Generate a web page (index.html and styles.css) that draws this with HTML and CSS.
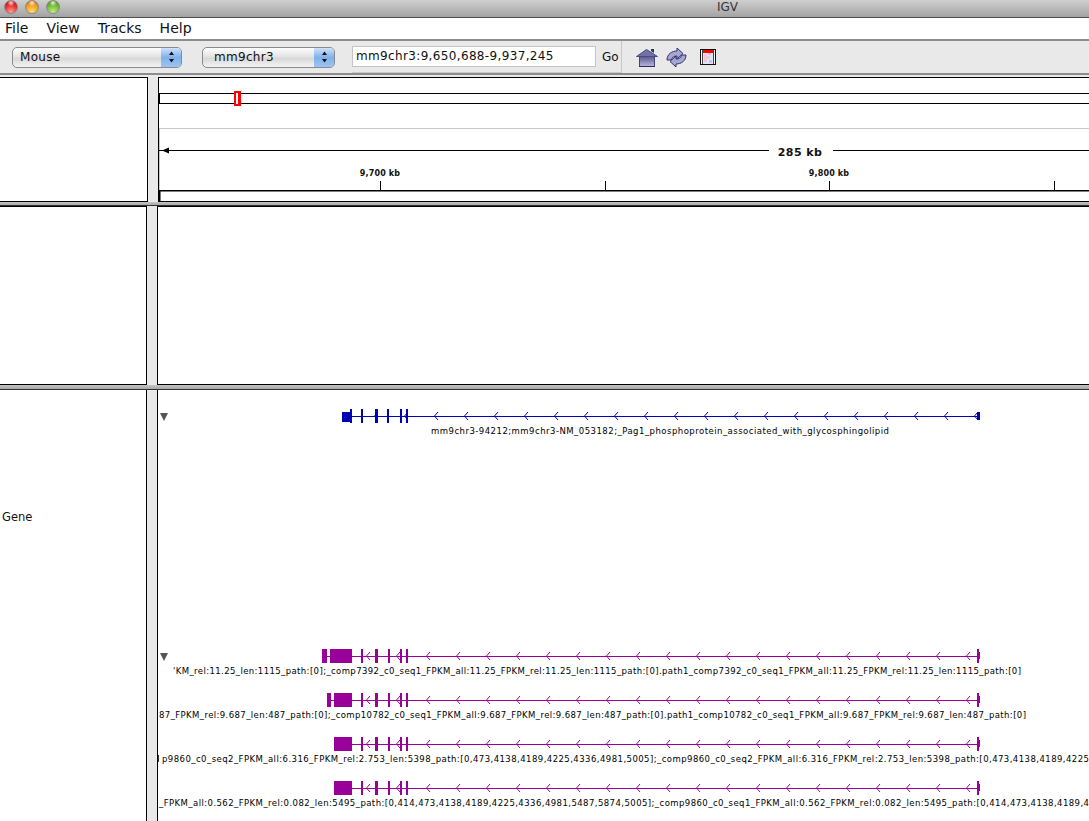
FILE: index.html
```html
<!DOCTYPE html>
<html lang="en">
<head>
  <meta charset="UTF-8" />
  <title>IGV</title>
  <link rel="stylesheet" href="styles.css">
</head>
<body>

  <div class="titlebar">
    <span class="light light-red"></span>
    <span class="light light-orange"></span>
    <span class="light light-green"></span>
    <span class="title">IGV</span>
  </div>

  <div class="menubar">
    <span class="menu-item">File</span>
    <span class="menu-item">View</span>
    <span class="menu-item">Tracks</span>
    <span class="menu-item">Help</span>
  </div>

  <div class="toolbar">
    <div class="select select-genome">
      <span class="select-label">Mouse</span>
      <span class="select-arrows">
        <svg width="5" height="12" viewBox="0 0 5 12"><path d="M2.500 .5L5 4H0zM0 8h5l-2.500 3.500z" fill="#111"/></svg>
      </span>
    </div>
    <div class="select select-chr">
      <span class="select-label">mm9chr3</span>
      <span class="select-arrows">
        <svg width="5" height="12" viewBox="0 0 5 12"><path d="M2.500 .5L5 4H0zM0 8h5l-2.500 3.500z" fill="#111"/></svg>
      </span>
    </div>
    <div class="search">
      <div class="search-box">mm9chr3:9,650,688-9,937,245</div>
      <span class="go">Go</span>
    </div>
    <div class="tools">
      <svg class="tool tool-home" width="22" height="19" viewBox="0 0 22 19">
        <defs>
          <linearGradient id="home-wall" x1="0" y1="0" x2="0" y2="1">
            <stop offset="0" stop-color="#5d5d92"/>
            <stop offset="1" stop-color="#b4b4da"/>
          </linearGradient>
        </defs>
        <path d="M15 1h3v4l-3-2z" fill="#2f2f6e"/>
        <path d="M0.500 8.500L10.500 1.500L21.500 8.500z" fill="#7171a6" stroke="#4a4a80"/>
        <rect x="4" y="9" width="14" height="9" fill="url(#home-wall)"/>
        <path d="M3.500 9v9M18.500 9v9" stroke="#44447a"/>
        <path d="M3 18.500h16" stroke="#2b2b60"/>
      </svg>
      <svg class="tool tool-refresh" width="22" height="21" viewBox="0 0 22 21">
        <path d="M1 13C1 7 6 4 11 4V1l6 5.500L11 12V9C8 9 6 10 5.500 13z" fill="#a6a6d2" stroke="#33336e"/>
        <path d="M20 8c0 6-5 9-10 9v3l-6-5.500L10 9v3c3 0 5-1 5.500-4z" fill="#a6a6d2" stroke="#33336e"/>
      </svg>
      <svg class="tool tool-region" width="16" height="16" viewBox="0 0 16 16">
        <rect x="0.500" y="0.500" width="15" height="15" fill="#fff" stroke="#111"/>
        <rect x="3" y="1" width="10" height="3" fill="#f00"/>
        <rect x="3" y="4" width="10" height="11" fill="#dfe4f6"/>
        <path d="M2.500 1v14M13.500 1v14" stroke="#444"/>
        <path d="M4 5h3v2h3v3H7v3H4z" fill="#f0c8d8"/>
        <path d="M8 4h3v2H8zM9 11h3v3H9z" fill="#bcc8f0"/>
      </svg>
    </div>
  </div>

  <div class="row row-header">
    <div class="name-panel"></div>
    <div class="gutter"></div>
    <div class="data-panel">
      <svg class="canvas" width="931" height="125" viewBox="158 77 931 125">
        <path d="M158 77.500h931M158.500 77v125" stroke="#000"/>
        <path d="M159.500 128v63M160 128.500h929" stroke="#c8c8c8"/>
        <rect x="159.500" y="93.500" width="940" height="10" fill="#fff" stroke="#000"/>
        <rect x="234" y="91" width="7" height="15" fill="#f00"/>
        <rect x="236" y="93" width="2" height="11" fill="#fff"/>
        <path d="M159 150.500h610M833 150.500h256" stroke="#000"/>
        <path d="M162 150.500l7-3v6z" fill="#000"/>
        <text class="span-label" x="800" y="155.500">285 kb</text>
        <text class="tick-label" x="380" y="175.500">9,700 kb</text>
        <text class="tick-label" x="829" y="175.500">9,800 kb</text>
        <path d="M380.500 181v10M605.500 181v10M829.500 181v10M1054.500 181v10" stroke="#000"/>
        <rect x="159" y="190" width="930" height="1.500" fill="#000"/>
        <rect x="159" y="190" width="1.500" height="12" fill="#000"/>
        <path d="M158 201.500h931" stroke="#000"/>
      </svg>
    </div>
  </div>
  <div class="splitter splitter-top"></div>

  <div class="row row-data">
    <div class="name-panel"></div>
    <div class="gutter"></div>
    <div class="data-panel"></div>
  </div>
  <div class="splitter splitter-bottom"></div>

  <div class="row row-gene">
    <div class="name-panel">
      <span class="track-name">Gene</span>
    </div>
    <div class="gutter"></div>
    <div class="data-panel">
      <svg class="canvas" width="931" height="431" viewBox="158 390 931 431">
        <defs>
          <pattern id="chev-blue" patternUnits="userSpaceOnUse" x="374" y="409" width="30" height="14">
            <path d="M4 3L.5 7 4 11" fill="none" stroke="#0000b2"/>
          </pattern>
          <pattern id="chev-purple" patternUnits="userSpaceOnUse" x="366" y="649" width="30" height="14">
            <path d="M4 3L.5 7 4 11" fill="none" stroke="#990099"/>
          </pattern>
          <g id="transcript">
            <rect x="334" y="649" width="18" height="14"/>
            <rect x="352" y="656" width="627" height="1"/>
            <rect x="366" y="649" width="613" height="14" fill="url(#chev-purple)"/>
            <rect x="361" y="649" width="2" height="14"/>
            <rect x="375" y="649" width="3" height="14"/>
            <rect x="388" y="649" width="2" height="14"/>
            <rect x="400" y="649" width="2" height="14"/>
            <rect x="406" y="649" width="2" height="14"/>
            <rect x="977" y="649" width="2" height="14"/>
            <rect x="979" y="652" width="1" height="7"/>
          </g>
        </defs>

        <path class="expand" d="M160 413h8l-4 8z"/>
        <g class="gene-blue">
          <rect x="351" y="416" width="628" height="1"/>
          <rect x="374" y="409" width="605" height="14" fill="url(#chev-blue)"/>
          <rect x="342" y="412" width="9" height="10"/>
          <rect x="350" y="409" width="2" height="14"/>
          <rect x="361" y="409" width="2" height="14"/>
          <rect x="375" y="409" width="3" height="14"/>
          <rect x="387" y="409" width="2" height="14"/>
          <rect x="400" y="409" width="2" height="14"/>
          <rect x="406" y="409" width="2" height="14"/>
          <rect x="977" y="412" width="3" height="8"/>
        </g>
        <text class="feature-label" x="431" y="434" textLength="458">mm9chr3-94212;mm9chr3-NM_053182;_Pag1_phosphoprotein_associated_with_glycosphingolipid</text>

        <path class="expand" d="M160 653h8l-4 8z"/>
        <g class="gene-purple">
          <use href="#transcript"/>
          <rect x="322" y="649" width="5" height="14"/>
          <rect x="327" y="656" width="3" height="1"/>
          <rect x="330" y="649" width="4" height="14"/>
        </g>
        <text class="feature-label" x="173" y="674" textLength="848">'KM_rel:11.25_len:1115_path:[0];_comp7392_c0_seq1_FPKM_all:11.25_FPKM_rel:11.25_len:1115_path:[0].path1_comp7392_c0_seq1_FPKM_all:11.25_FPKM_rel:11.25_len:1115_path:[0]</text>

        <g class="gene-purple" transform="translate(0 44)">
          <use href="#transcript"/>
          <rect x="327" y="649" width="4" height="14"/>
          <rect x="331" y="656" width="3" height="1"/>
        </g>
        <text class="feature-label" x="159" y="718" textLength="867">87_FPKM_rel:9.687_len:487_path:[0];_comp10782_c0_seq1_FPKM_all:9.687_FPKM_rel:9.687_len:487_path:[0].path1_comp10782_c0_seq1_FPKM_all:9.687_FPKM_rel:9.687_len:487_path:[0]</text>

        <g class="gene-purple" transform="translate(0 88)">
          <use href="#transcript"/>
        </g>
        <rect x="158" y="755" width="1" height="7" fill="#333"/>
        <text class="feature-label" x="162" y="762" textLength="927">p9860_c0_seq2_FPKM_all:6.316_FPKM_rel:2.753_len:5398_path:[0,473,4138,4189,4225,4336,4981,5005];_comp9860_c0_seq2_FPKM_all:6.316_FPKM_rel:2.753_len:5398_path:[0,473,4138,4189,4225</text>

        <g class="gene-purple" transform="translate(0 132)">
          <use href="#transcript"/>
        </g>
        <text class="feature-label" x="159" y="806" textLength="930">_FPKM_all:0.562_FPKM_rel:0.082_len:5495_path:[0,414,473,4138,4189,4225,4336,4981,5487,5874,5005];_comp9860_c0_seq1_FPKM_all:0.562_FPKM_rel:0.082_len:5495_path:[0,414,473,4138,4189,4</text>
      </svg>
    </div>
  </div>

</body>
</html>
```

FILE: styles.css
```css
html, body { margin: 0; height: 821px; overflow: hidden; background: #fff; }
body { font-family: "DejaVu Sans", "Open Sans", sans-serif; color: #111; }

.titlebar { height: 17px; display: flex; align-items: flex-start; gap: 7px; padding-left: 4px; background: linear-gradient(#cfcfcf, #a3a3a3); border-bottom: 1px solid #4f4f4f; }
.light { width: 14px; height: 14px; border-radius: 50%; box-sizing: border-box; border: 1px solid #8a8a8a; }
.light-red { background: radial-gradient(circle at 50% 15%, #ffd6d6 0, transparent 30%), radial-gradient(circle at 50% 90%, #ff9c94, #e6262a 60%, #b8181c); }
.light-orange { background: radial-gradient(circle at 50% 15%, #ffe8c8 0, transparent 30%), radial-gradient(circle at 50% 90%, #ffdd70, #f09a1c 60%, #c46a10); }
.light-green { background: radial-gradient(circle at 50% 15%, #e4f6d0 0, transparent 30%), radial-gradient(circle at 50% 90%, #c4ec80, #6cb634 60%, #448a1c); }
.title { margin-left: 650px; font-size: 12px; line-height: 15px; color: #333; }

.menubar { height: 21px; display: flex; gap: 18px; padding-left: 5px; background: #fff; font-size: 14px; line-height: 21px; }
.toolbar { height: 32px; display: flex; align-items: center; padding-left: 12px; background: #e9e9e9; border-top: 2px solid #8c8c8c; border-bottom: 2px solid #8c8c8c; }

.select { height: 21px; display: flex; justify-content: space-between; box-sizing: border-box; border: 1px solid #8a8a8a; border-radius: 5px; overflow: hidden; background: linear-gradient(#fdfdfd, #e4e4e4 45%, #d8d8d8 55%, #f4f4f4); font-size: 12px; line-height: 19px; }
.select-genome { width: 170px; }
.select-chr { width: 133px; margin-left: 20px; }
.select-label { padding-left: 7px; letter-spacing: .3px; }
.select-chr .select-label { padding-left: 11px; }
.select-arrows { width: 20px; display: flex; align-items: center; justify-content: center; background: linear-gradient(#cfe2fa, #7fb0ec 50%, #9cc4f4); }

.search { height: 32px; display: flex; align-items: center; margin-left: 17px; padding-right: 2px; box-sizing: border-box; border-right: 1px solid #c8c8c8; border-bottom: 1px solid #c8c8c8; }
.search-box { width: 244px; height: 21px; box-sizing: border-box; padding-left: 3px; background: #fff; border: 1px solid #c4c4c4; font-size: 12px; line-height: 19px; letter-spacing: .35px; }
.go { margin-left: 6px; font-size: 12px; }

.tools { display: flex; align-items: center; margin-left: 14px; }
.tool { display: block; }
.tool-refresh { margin-left: 8px; }
.tool-region { margin-left: 12px; }

.row { display: grid; grid-template-columns: 147px 10px 932px; }
.row-header { height: 125px; grid-template-columns: 148px 10px 931px; border-top: 2px solid #e9e9e9; }
.row-data { height: 179px; }
.row-gene { height: 431px; }

.name-panel { background: #fff; border-top: 1px solid #000; border-bottom: 1px solid #000; border-right: 1px solid #000; box-sizing: border-box; }
.row-gene .name-panel, .row-gene .data-panel { border-top: 0; border-bottom: 0; }
.gutter { background: #e9e9e9; }
.data-panel { background: #fff; border-top: 1px solid #000; border-bottom: 1px solid #000; border-left: 1px solid #000; box-sizing: border-box; }
.row-header .data-panel { border: 0; }

.canvas { display: block; }

.splitter { background: linear-gradient(#c4c4c4, #a8a8a8); border-bottom: 1px solid #333; }
.splitter-top { height: 3px; }
.splitter-bottom { height: 4px; }

.track-name { display: block; margin: 120px 0 0 2px; font-size: 11.500px; line-height: 14px; }

.span-label { font: bold 11px "DejaVu Sans", sans-serif; text-anchor: middle; fill: #111; letter-spacing: .4px; }
.tick-label { font: bold 8px "DejaVu Sans", sans-serif; text-anchor: middle; fill: #111; letter-spacing: .15px; }
.feature-label { font: 8.500px "DejaVu Sans", sans-serif; fill: #000; }
.expand { fill: #555; }
.gene-blue { fill: #0000b2; }
.gene-purple { fill: #990099; }
```
